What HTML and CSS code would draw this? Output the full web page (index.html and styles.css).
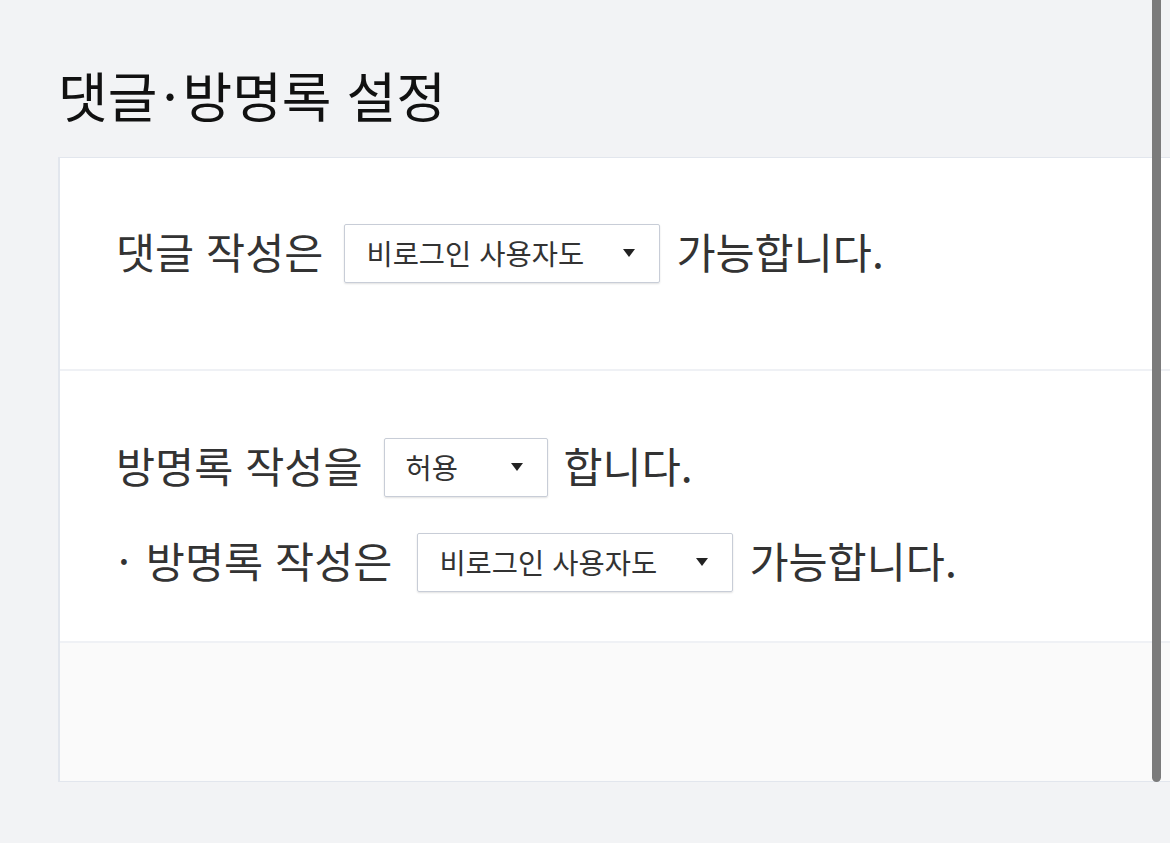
FILE: index.html
```html
<!DOCTYPE html>
<html lang="ko">
<head>
    <meta charset="UTF-8">
    <meta name="viewport" content="width=device-width, initial-scale=1.0">
    <link rel="stylesheet" href="styles.css">
    <title>댓글·방명록 설정</title>
</head>
<body>
    <div class="page">
        <h2 class="title">댓글<span class="mid">·</span>방명록 설정</h2>
        <div class="card">
            <div class="section">
                <div class="row">
                    <span>댓글 작성은</span>
                    <div class="select wide">비로그인 사용자도<i class="arrow"></i></div>
                    <span>가능합니다.</span>
                </div>
            </div>
            <div class="section second">
                <div class="row">
                    <span>방명록 작성을</span>
                    <div class="select short">허용<i class="arrow"></i></div>
                    <span>합니다.</span>
                </div>
                <div class="row sub">
                    <span class="dot">·</span>
                    <span>방명록 작성은</span>
                    <div class="select wide">비로그인 사용자도<i class="arrow"></i></div>
                    <span>가능합니다.</span>
                </div>
            </div>
            <div class="footer"></div>
        </div>
    </div>
    <div class="scrollbar"></div>
</body>
</html>
```

FILE: styles.css
```css
body {
    margin: 0;
    background-color: #f2f3f5;
    color: #333;
    font-family: "Noto Sans CJK KR", "Noto Sans", sans-serif;
    overflow: hidden;
}
.page {
    padding-left: 58px;
    width: 1140px;
}
.title {
    margin: 0;
    padding-top: 58px;
    height: 157px;
    box-sizing: border-box;
    font-size: 54px;
    font-weight: 400;
    line-height: 74px;
    color: #111;
}
.mid {
    margin: 0 5px;
}
.card {
    background-color: white;
    border: 1px solid #e2e6ed;
    border-left-width: 2px;
}
.section {
    height: 213px;
    padding: 65px 0 0 56px;
    box-sizing: border-box;
    border-bottom: 2px solid #eff1f5;
}
.second {
    height: 272px;
    padding-top: 66px;
}
.row {
    display: flex;
    align-items: center;
    font-size: 42.5px;
    height: 60px;
    line-height: 1;
}
.row span {
    padding-bottom: 4px;
}
.sub {
    margin-top: 35px;
}
.dot {
    margin: 0 16px 0 2px;
}
.select {
    display: flex;
    align-items: center;
    justify-content: space-between;
    height: 59px;
    box-sizing: border-box;
    margin: 0 16px 0 21px;
    padding: 0 24px 0 21px;
    border: 1px solid #c8cdd7;
    box-shadow: 0 1px 2px rgba(0, 0, 0, 0.12);
    border-radius: 2px;
    font-size: 28.5px;
    color: #333;
}
.sub .select {
    margin-left: 25px;
}
.wide {
    width: 316px;
}
.short {
    width: 164px;
}
.arrow {
    width: 0;
    height: 0;
    border-left: 6px solid transparent;
    border-right: 6px solid transparent;
    border-top: 8px solid #222;
}
.footer {
    height: 138px;
    background-color: #fafafa;
}
.scrollbar {
    position: fixed;
    top: -6px;
    left: 1152px;
    width: 9px;
    height: 788px;
    border-radius: 5px;
    background-color: #7b7b7b;
}
```
